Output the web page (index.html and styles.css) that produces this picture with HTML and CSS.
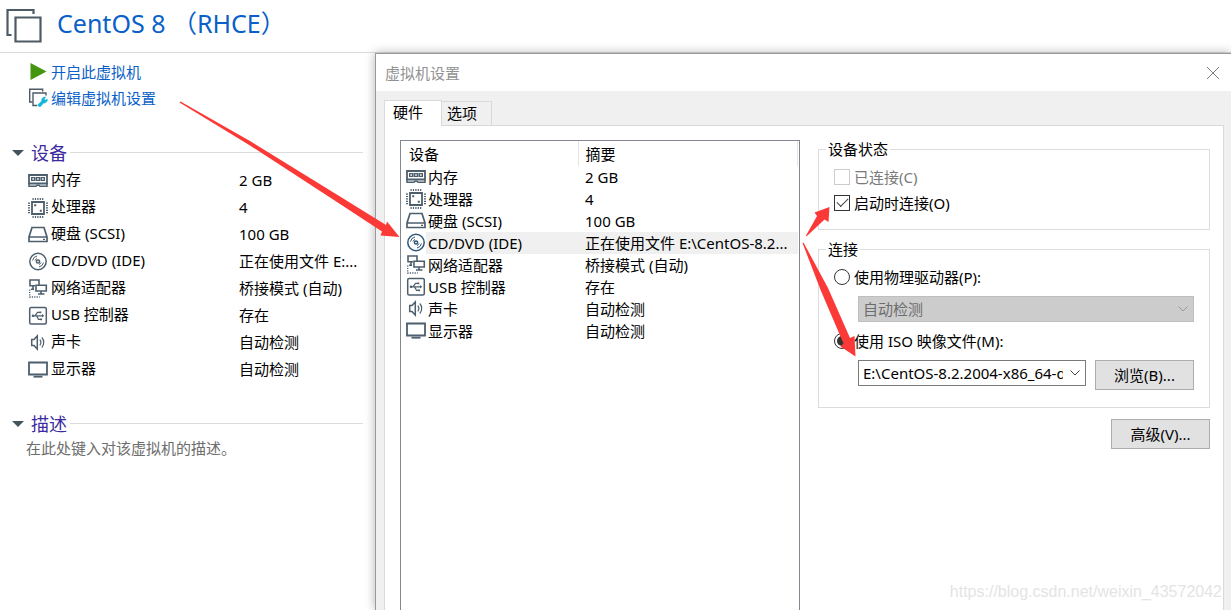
FILE: index.html
```html
<!DOCTYPE html>
<html lang="zh-CN">
<head>
<meta charset="utf-8">
<title>CentOS 8 （RHCE）</title>
<link rel="stylesheet" href="styles.css">
</head>
<body>
<svg class="sprite" aria-hidden="true">
  <symbol id="i-mem" viewBox="0 0 20 20"><path d="M1 4h18v8.500H1z" fill="none" stroke="currentColor" stroke-width="1.800"/><path d="M1 12v3.300h7l1-1h2l1 1h7V12" fill="none" stroke="currentColor" stroke-width="1.500"/><path d="M3.700 6.600h3v2.800h-3zM8.500 6.600h3v2.800h-3zM13.300 6.600h3v2.800h-3z" fill="none" stroke="currentColor" stroke-width="1.400"/></symbol>
  <symbol id="i-cpu" viewBox="0 0 20 20"><path d="M4 4h12v12H4z" fill="none" stroke="currentColor" stroke-width="1.800"/><path d="M4.500 1h12M4.500 19h12" stroke="currentColor" stroke-width="2" stroke-dasharray="1.200 1.200"/><path d="M1 4.500v12M19 4.500v12" stroke="currentColor" stroke-width="2" stroke-dasharray="1.200 1.200"/><path d="M6.200 6.200h2v2h-2zM11.800 11.800h2v2h-2z" fill="currentColor"/></symbol>
  <symbol id="i-disk" viewBox="0 0 20 20"><path d="M4 2.500h12l3 9.500v4.500H1v-4.500zM1 12h18" fill="none" stroke="currentColor" stroke-width="1.700"/><path d="M15 14.300h2" stroke="currentColor" stroke-width="1.200"/></symbol>
  <symbol id="i-cd" viewBox="0 0 20 20"><circle cx="10" cy="9.500" r="8.200" fill="none" stroke="currentColor" stroke-width="1.500"/><circle cx="10" cy="9.500" r="1.600" fill="none" stroke="currentColor" stroke-width="1.500"/><path d="M4.500 8.500A5.800 5.800 0 0 1 9 4M7 8.500A3.500 3.500 0 0 1 9 6.500M15.500 10.500A5.800 5.800 0 0 1 11 15M13 10.500A3.500 3.500 0 0 1 11 12.500" fill="none" stroke="currentColor" stroke-width="1"/></symbol>
  <symbol id="i-net" viewBox="0 0 20 20"><path d="M7 6.700H2V1h9v4.500M8 6.300h10.300V12H8zM13 12v3M10 15h6.500M5 7v3.500M3 10.300h3" fill="none" stroke="currentColor" stroke-width="1.600"/><path d="M1.700 10.500v7.500h10" fill="none" stroke="currentColor" stroke-width="1.300" stroke-dasharray="1.200 1.200"/></symbol>
  <symbol id="i-usb" viewBox="0 0 20 20"><rect x="1.700" y="1.500" width="16.600" height="16.600" rx="1.500" fill="none" stroke="currentColor" stroke-width="1.500"/><path d="M4.500 9.800H15M7 9.800l2.500-3.500H12M8.500 9.800l2 3.500H13" fill="none" stroke="currentColor" stroke-width="1.200"/><circle cx="5" cy="9.800" r="1.300" fill="currentColor"/><path d="M14 8l2.300 1.800-2.300 1.800zM11.500 5.400h1.800v1.800h-1.800zM12.300 12.400h1.800v1.800h-1.800z" fill="currentColor"/></symbol>
  <symbol id="i-snd" viewBox="0 0 20 20"><path d="M3.700 6.500H6l3.300-3.600v13.200L6 12.500H3.700z" fill="none" stroke="currentColor" stroke-width="1.500"/><path d="M11.800 6.700a4.500 4.500 0 0 1 0 5.600M13.800 4.500a7.500 7.500 0 0 1 0 10" fill="none" stroke="currentColor" stroke-width="1.200"/></symbol>
  <symbol id="i-disp" viewBox="0 0 20 20"><path d="M1 2.500h18v12H1z" fill="none" stroke="currentColor" stroke-width="1.800"/><path d="M5.500 16.700h9" stroke="currentColor" stroke-width="1.800"/></symbol>
</svg>

<header class="vm-header">
  <svg class="vm-icon" viewBox="0 0 38 36" aria-hidden="true"><path d="M5.500 27h-4V2h26v4" fill="none" stroke="#4d5b66" stroke-width="2.200"/><path d="M9.500 9.500h25v24h-25z" fill="none" stroke="#4d5b66" stroke-width="2.200"/></svg>
  <h1>CentOS 8 （RHCE）</h1>
</header>

<main class="workspace">
  <section class="summary">
    <nav class="actions">
      <a href="#start"><svg viewBox="0 0 20 20" class="icon" aria-hidden="true"><path d="M2.500 1L18.500 9.500 2.500 18z" fill="#45960f"/></svg>开启此虚拟机</a>
      <a href="#settings"><svg viewBox="0 0 20 20" class="icon" aria-hidden="true"><path d="M4.500 14H1.700V1.300h13V3.500" fill="none" stroke="#4d5b66" stroke-width="1.400"/><path d="M9 17.500H5V5h13v2.500" fill="none" stroke="#4d5b66" stroke-width="1.400"/><path d="M9.500 17.300l4.200-4.300a3.400 3.400 0 0 1 3.900-4l-1.400 2 1 1.200 2.200-.9a3.400 3.400 0 0 1-3.900 3.700L12 18.900z" fill="#12b5d8" stroke="#12b5d8" stroke-width=".6"/></svg>编辑虚拟机设置</a>
    </nav>

    <h2><button type="button" class="fold"><svg viewBox="0 0 12 6" aria-hidden="true"><path d="M0 0h12L6 6z" fill="#44545f"/></svg>设备</button></h2>
    <table class="devices">
      <tbody>
        <tr><th scope="row"><svg class="icon"><use href="#i-mem"/></svg>内存</th><td>2 GB</td></tr>
        <tr><th scope="row"><svg class="icon"><use href="#i-cpu"/></svg>处理器</th><td>4</td></tr>
        <tr><th scope="row"><svg class="icon"><use href="#i-disk"/></svg>硬盘 (SCSI)</th><td>100 GB</td></tr>
        <tr><th scope="row"><svg class="icon"><use href="#i-cd"/></svg>CD/DVD (IDE)</th><td>正在使用文件 E:...</td></tr>
        <tr><th scope="row"><svg class="icon"><use href="#i-net"/></svg>网络适配器</th><td>桥接模式 (自动)</td></tr>
        <tr><th scope="row"><svg class="icon"><use href="#i-usb"/></svg>USB 控制器</th><td>存在</td></tr>
        <tr><th scope="row"><svg class="icon"><use href="#i-snd"/></svg>声卡</th><td>自动检测</td></tr>
        <tr><th scope="row"><svg class="icon"><use href="#i-disp"/></svg>显示器</th><td>自动检测</td></tr>
      </tbody>
    </table>

    <h2><button type="button" class="fold"><svg viewBox="0 0 12 6" aria-hidden="true"><path d="M0 0h12L6 6z" fill="#44545f"/></svg>描述</button></h2>
    <p class="hint">在此处键入对该虚拟机的描述。</p>
  </section>

  <section class="dialog" role="dialog" aria-labelledby="dlg-title">
    <div class="titlebar">
      <span id="dlg-title">虚拟机设置</span>
      <button type="button" class="close" aria-label="关闭"><svg viewBox="0 0 14 14" aria-hidden="true"><path d="M1 1l12 12M13 1L1 13" stroke="#808080" stroke-width="1"/></svg></button>
    </div>
    <div class="tabs" role="tablist">
      <button type="button" role="tab" class="tab active" aria-selected="true">硬件</button>
      <button type="button" role="tab" class="tab" aria-selected="false">选项</button>
    </div>
    <div class="panel">
      <div class="listbox">
        <table class="hardware">
          <thead><tr><th scope="col">设备</th><th scope="col">摘要</th></tr></thead>
          <tbody>
            <tr><td><div class="cell"><svg class="icon"><use href="#i-mem"/></svg><span>内存</span></div></td><td>2 GB</td></tr>
            <tr><td><div class="cell"><svg class="icon"><use href="#i-cpu"/></svg><span>处理器</span></div></td><td>4</td></tr>
            <tr><td><div class="cell"><svg class="icon"><use href="#i-disk"/></svg><span>硬盘 (SCSI)</span></div></td><td>100 GB</td></tr>
            <tr class="selected"><td><div class="cell"><svg class="icon"><use href="#i-cd"/></svg><span>CD/DVD (IDE)</span></div></td><td>正在使用文件 E:\CentOS-8.2...</td></tr>
            <tr><td><div class="cell"><svg class="icon"><use href="#i-net"/></svg><span>网络适配器</span></div></td><td>桥接模式 (自动)</td></tr>
            <tr><td><div class="cell"><svg class="icon"><use href="#i-usb"/></svg><span>USB 控制器</span></div></td><td>存在</td></tr>
            <tr><td><div class="cell"><svg class="icon"><use href="#i-snd"/></svg><span>声卡</span></div></td><td>自动检测</td></tr>
            <tr><td><div class="cell"><svg class="icon"><use href="#i-disp"/></svg><span>显示器</span></div></td><td>自动检测</td></tr>
          </tbody>
        </table>
      </div>
      <form class="details">
        <fieldset class="status">
          <legend>设备状态</legend>
          <label class="option disabled"><input type="checkbox" disabled>已连接(C)</label>
          <label class="option"><input type="checkbox" checked>启动时连接(O)</label>
        </fieldset>
        <fieldset class="connection">
          <legend>连接</legend>
          <label class="option"><input type="radio" name="source">使用物理驱动器(P):</label>
          <div class="indent"><select aria-label="物理驱动器" disabled><option>自动检测</option></select></div>
          <label class="option"><input type="radio" name="source" checked>使用 ISO 映像文件(M):</label>
          <div class="indent">
            <select aria-label="ISO 映像文件"><option>E:\CentOS-8.2.2004-x86_64-dvd1.iso</option></select>
            <button type="button" class="push">浏览(B)...</button>
          </div>
        </fieldset>
        <button type="button" class="push advanced">高级(V)...</button>
      </form>
    </div>
  </section>
</main>

<svg class="arrows" viewBox="0 0 1231 610" aria-hidden="true">
  <path d="M179.500 102.500L180.500 101.500L250 141L340 196.500L386 225l1-3.500L399.500 237L380.500 235.500l1.500-4L340 204L250 145.500z"/>
  <path d="M805.500 236.500l11.500-20.500-2.500-3.500L829.500 207l-1 15-4-2.500-17 16z"/>
  <path d="M802.500 243l1-.5L828 288l22 50 4.500-2L855.500 356.500 840.500 346.500l3-3L821 291z"/>
</svg>
<div class="watermark">https://blog.csdn.net/weixin_43572042</div>
</body>
</html>
```
FILE: styles.css
```css
* { box-sizing: border-box; }

html, body { height: 100%; }

body {
  margin: 0;
  display: flex;
  flex-direction: column;
  overflow: hidden;
  position: relative;
  background: #fff;
  color: #000;
  font: 15px/22px "Noto Sans", "Noto Sans CJK SC", sans-serif;
}

button, select, input { font: inherit; color: inherit; margin: 0; }
h1, h2, p { margin: 0; font-weight: 400; }
table { border-collapse: collapse; table-layout: fixed; width: 100%; }
th, td { padding: 0; text-align: left; font-weight: 400; white-space: nowrap; }

.sprite { display: none; }
.icon { width: 20px; height: 20px; flex: none; color: #4d5f6d; }

.vm-header {
  display: flex;
  align-items: flex-start;
  gap: 13px;
  height: 53px;
  padding: 8px 6px;
  border-bottom: 1px solid #dcdcdc;
}
.vm-icon { width: 38px; height: 36px; }
.vm-header h1 { color: #0a5fc8; font-size: 25px; line-height: 30px; }

.workspace { flex: 1; display: flex; min-height: 0; }

.summary { flex: 0 0 375px; padding: 6px 12px; }
.actions a {
  display: flex;
  align-items: center;
  gap: 3px;
  height: 26px;
  padding-left: 16px;
  color: #0a5fc8;
  text-decoration: none;
}
.summary h2 {
  display: flex;
  align-items: center;
  gap: 3px;
  height: 27px;
  margin-top: 28px;
}
.summary h2::after { content: ""; flex: 1; height: 1px; background: #dcdcdc; }
.fold {
  display: flex;
  align-items: center;
  gap: 7px;
  padding: 0;
  border: 0;
  background: none;
  color: #3c2ba0;
  font-size: 18px;
}
.fold svg { width: 12px; height: 6px; }

.devices th { width: 227px; padding-left: 16px; }
.devices tr { height: 27px; }
.devices .icon { vertical-align: middle; margin-right: 3px; }
.devices + h2 { margin-top: 28px; }
.hint { padding-left: 14px; color: #6d6d6d; }

.dialog {
  flex: 1;
  min-width: 0;
  display: flex;
  flex-direction: column;
  background: #f0f0f0;
  border: solid #999;
  border-width: 1px 0 0 1px;
  box-shadow: 0 0 10px rgba(0, 0, 0, .3);
}
.titlebar {
  display: flex;
  align-items: center;
  justify-content: space-between;
  height: 37px;
  padding: 0 11px 0 9px;
  background: #fff;
  color: #929292;
}
.close { display: flex; padding: 0; border: 0; background: none; }
.close svg { width: 14px; height: 14px; }

.tabs { display: flex; align-items: flex-end; padding: 9px 0 0 8px; }
.tab {
  width: 50px;
  height: 24px;
  padding: 0 5px 2px;
  border: 1px solid #d9d9d9;
  border-width: 1px 1px 0 0;
  background: #f0f0f0;
  text-align: left;
}
.tab.active {
  width: 58px;
  height: 26px;
  margin-bottom: -1px;
  padding: 0 8px 4px;
  border-left-width: 1px;
  background: #fff;
  z-index: 1;
}

.panel {
  flex: 1;
  min-height: 0;
  display: grid;
  grid-template-columns: 400fr 392fr;
  gap: 18px;
  margin: 0 7px 0 8px;
  padding: 14px 13px 0 15px;
  border: solid #d9d9d9;
  border-width: 1px 1px 0;
  background: #fff;
}
.listbox { padding: 0 1px; border: 1px solid #828790; border-bottom: 0; }
.hardware th:first-child { width: 176px; }
.hardware th { height: 25px; padding-left: 7px; border-right: 1px solid #e5e5e5; }
.hardware tbody tr { height: 22px; }
.hardware td { padding-left: 7px; }
.hardware td:first-child { padding-left: 4px; }
.cell { display: flex; align-items: center; }
.cell span { flex: 1; padding-left: 2px; }
.selected td:last-child, .selected .cell span { background: #f0f0f0; }
.selected .icon { color: #2f5878; }

.details { display: flex; flex-direction: column; min-width: 0; }
fieldset { min-width: 0; margin: 0; border: 1px solid #dcdcdc; }
legend { margin-left: -8px; padding: 0 2px; line-height: 20px; }
.status { margin-top: -1px; padding: 5px 15px 13px; }
.connection { margin-top: 9px; padding: 5px 15px 17px; }
.option { display: flex; align-items: center; gap: 4px; height: 26px; }
.disabled { color: #7a7a7a; }
.option input {
  appearance: none;
  display: grid;
  place-items: center;
  width: 16px;
  height: 16px;
  border: 1px solid #333;
  background: #fff;
}
.option input:disabled { border-color: #ccc; }
.option input[type="radio"] { border-radius: 50%; }
.option input[type="radio"]:checked::after {
  content: "";
  width: 10px;
  height: 10px;
  border-radius: 50%;
  background: #333;
}
.option input[type="checkbox"]:checked::after {
  content: "";
  width: 10px;
  height: 5px;
  border: solid #444;
  border-width: 0 0 1px 1px;
  transform: translateY(-2px) rotate(-45deg);
}
.indent { display: flex; gap: 9px; margin: 6px 0 6px 24px; }
.connection .indent:last-child { margin-bottom: 0; }
select {
  appearance: none;
  flex: 1;
  min-width: 0;
  height: 26px;
  padding: 0 22px 0 4px;
  border: 1px solid #7a7a7a;
  border-radius: 0;
  background: #fff url("data:image/svg+xml,%3Csvg xmlns='http://www.w3.org/2000/svg' width='10' height='6'%3E%3Cpath d='M.5.5L5 5 9.500.5' fill='none' stroke='%23444'/%3E%3C/svg%3E") no-repeat right 5px center;
}
select:disabled {
  border-color: #bfbfbf;
  background-color: #ccc;
  background-image: url("data:image/svg+xml,%3Csvg xmlns='http://www.w3.org/2000/svg' width='10' height='6'%3E%3Cpath d='M.5.5L5 5 9.500.5' fill='none' stroke='%23999'/%3E%3C/svg%3E");
  color: #6d6d6d;
  opacity: 1;
}
.push {
  flex: none;
  width: 99px;
  height: 30px;
  padding: 0;
  border: 1px solid #adadad;
  background: #e1e1e1;
}
.advanced { align-self: flex-end; margin-top: 11px; }

.arrows {
  position: absolute;
  top: 0;
  left: 0;
  width: 1231px;
  height: 610px;
  fill: #fb3a38;
  pointer-events: none;
}
.watermark {
  position: absolute;
  right: 9px;
  bottom: 7px;
  color: #e4e4e4;
  font: 16px/22px "Liberation Sans", sans-serif;
}
```
